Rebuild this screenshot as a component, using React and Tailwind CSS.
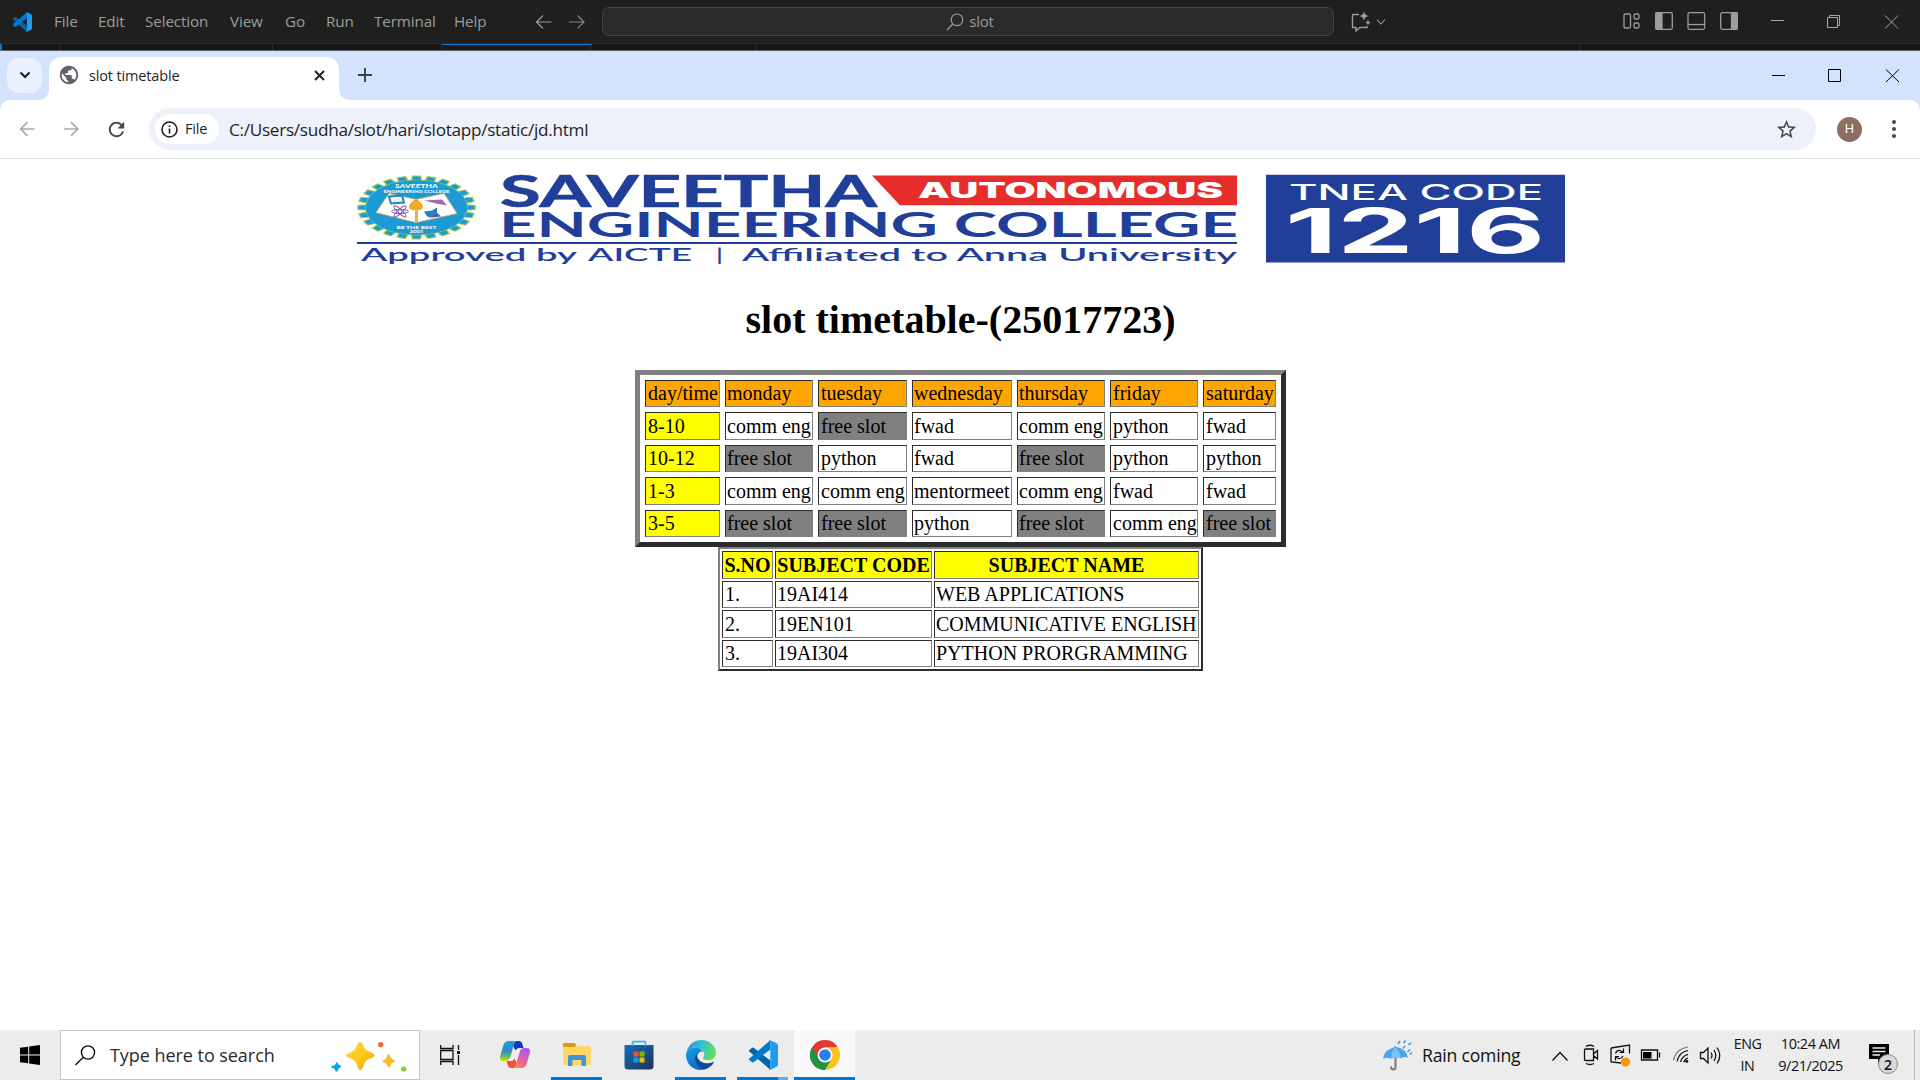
import React from "react";
import { MdPublic, MdStarBorder, MdRefresh } from "react-icons/md";

const menus = [
  ["File", "w-[44px]"],
  ["Edit", "w-[47px]"],
  ["Selection", "w-[85px]"],
  ["View", "w-[55px]"],
  ["Go", "w-[41px]"],
  ["Run", "w-[48px]"],
  ["Terminal", "w-[80px]"],
  ["Help", "w-[81px]"],
];

function VsLogo({ size }) {
  return (
    <svg width={size} height={size} viewBox="0 0 30 30" className="shrink-0">
      <path d="M2 9.4 4 7.8Q5 7.2 6 8L22.3 20.5V29.7L1.3 11.6Q.2 10.4 2 9.4Z" fill="#0065a9" />
      <path d="M2 20.6 4 22.2Q5 22.8 6 22L22.3 9.5V.3L1.3 18.4Q.2 19.6 2 20.6Z" fill="#007acc" />
      <path d="M22 .2 28.2 3.1Q30 4 30 5.6V24.4Q30 26 28.2 26.9L22 29.8Q21 30 20.6 29.2 22.3 29.4 22.3 27.5V2.5Q22.3.6 20.6.8 21 0 22 .2Z" fill="#1f9cf0" />
    </svg>
  );
}

function VsBar() {
  return (
    <header className="h-[51px] bg-[#1f1f1f] text-[#9d9d9d]">
      <div className="flex h-[43px] items-center">
        <div className="ml-[12px] flex w-[42px]">
          <VsLogo size={20} />
        </div>
        <nav className="flex text-[15.2px] tracking-[-0.1px]">
          {menus.map(([m, w]) => (
            <span key={m} className={w}>{m}</span>
          ))}
        </nav>
        <svg width="50" height="16" viewBox="0 0 50 16" fill="none" stroke="#9d9d9d" strokeWidth="1.2">
          <path d="M16.5 8H1.5M8 1.5 1.5 8 8 14.5" />
          <path d="M34 8H49M42.5 1.5 49 8 42.5 14.5" stroke="#858585" />
        </svg>
        <div className="ml-[17px] flex h-[29px] w-[732px] items-center justify-center gap-[5px] rounded-[7px] border border-[#454545] bg-[#2a2a2a] pl-[4px] text-[15px] tracking-[-0.2px]">
          <svg width="18" height="18" viewBox="0 0 18 18" fill="none" stroke="#9d9d9d" strokeWidth="1.2">
            <circle cx="11" cy="6.8" r="5.8" />
            <path d="M6.9 11 1 17" />
          </svg>
          slot
        </div>
        <svg width="36" height="22" viewBox="0 0 36 22" className="ml-[16px]" fill="none" stroke="#9d9d9d" strokeWidth="1.4">
          <path d="M9 3.5H3.5Q2.5 3.5 2.5 4.500V16.500H6V20L10 16.500H17V15" />
          <path d="M14 0Q14.500 4.500 19 5 14.500 5.500 14 10 13.500 5.500 9 5 13.500 4.500 14 0ZM18 8.500Q18.300 11.200 21 11.500 18.300 11.800 18 14.500 17.700 11.800 15 11.500 17.700 11.200 18 8.500Z" fill="#9d9d9d" stroke="none" />
          <path d="M27 8.500 31 13 35 8.500" strokeWidth="1.1" />
        </svg>
        <svg width="116" height="20" viewBox="0 0 116 20" className="-mt-px ml-[237px]" fill="none" stroke="#9d9d9d" strokeWidth="1.3">
          <rect x="1" y="3" width="6.500" height="14" rx="1.500" />
          <rect x="11" y="3" width="5" height="5" rx="1.500" />
          <rect x="11" y="12" width="5" height="5" rx="1.500" />
          <rect x="32.700" y="1.700" width="16.600" height="16.600" rx="1.500" />
          <path d="M33 2H39V18H33Z" fill="#9d9d9d" />
          <rect x="65" y="1.700" width="16.600" height="16.600" rx="1.500" />
          <path d="M65 13.500H81.500" />
          <rect x="97.700" y="1.700" width="16.600" height="16.600" rx="1.500" />
          <path d="M108.500 2H114V18H108.500Z" fill="#9d9d9d" />
        </svg>
        <svg width="128" height="14" viewBox="0 0 128 14" className="ml-[32px]" fill="none" stroke="#a8a8a8" strokeWidth="1">
          <path d="M0 5.500H13M56.500 2.500H66.500V12.500H56.500ZM58.500 2.500V.5H68.500V10.500H66.500" />
          <path d="M114 .5 127 13.500M127 .5 114 13.500" />
        </svg>
      </div>
      <div className="flex h-[7px] border-t border-[#2b2b2b] bg-[#161616]">
        <div className="w-[60px] border-l-2 border-r border-l-[#0078d4] border-r-[#2b2b2b]" />
        <div className="w-[213px] border-r border-[#2b2b2b]" />
        <div className="w-[169px] border-r border-[#2b2b2b]" />
        <div className="w-[150px] border-r border-t border-r-[#2b2b2b] border-t-[#0078d4] bg-[#1b1b1b]" />
        <div className="w-[164px] border-r border-[#2b2b2b]" />
        <div className="w-[825px] border-r border-[#2b2b2b]" />
      </div>
      <div className="h-px bg-[#596069]" />
    </header>
  );
}

function TabStrip() {
  return (
    <div className="flex h-[49px] items-center bg-[#d3e3fd]">
      <div className="ml-[7px] flex h-[35px] w-[35px] items-center justify-center rounded-[12px] bg-[#e9f1fe]">
        <svg width="12" height="8" viewBox="0 0 12 8" className="mb-[2px] ml-px" fill="none" stroke="#1f1f1f" strokeWidth="2.200">
          <path d="M1.500 1.500 6 6 10.500 1.500" />
        </svg>
      </div>
      <svg width="12" height="12" viewBox="0 0 12 12" className="-ml-[5px] self-end">
        <path d="M12 0V12H0Q12 12 12 0Z" fill="#fff" />
      </svg>
      <div className="flex h-[43px] w-[290px] items-center self-end rounded-t-[12px] bg-white">
        <MdPublic className="mb-[7px] ml-[9px] size-[22px] text-[#5f6368]" />
        <span className="mb-[6px] ml-[9px] w-[225px] text-[14.5px] tracking-[-0.15px] text-[#1f1f1f]">slot timetable</span>
        <svg width="11" height="11" viewBox="0 0 11 11" className="mb-[7px]" stroke="#1f1f1f" strokeWidth="1.900">
          <path d="M1 1 10 10M10 1 1 10" />
        </svg>
      </div>
      <svg width="12" height="12" viewBox="0 0 12 12" className="self-end">
        <path d="M0 0V12H12Q0 12 0 0Z" fill="#fff" />
      </svg>
      <svg width="14" height="14" viewBox="0 0 14 14" className="-mt-px ml-[7px]" stroke="#3c4043" strokeWidth="1.900">
        <path d="M0 7H14M7 0V14" />
      </svg>
      <svg width="128" height="14" viewBox="0 0 128 14" className="ml-auto mr-[20px]" fill="none" stroke="#000" strokeWidth="1">
        <path d="M0 6.500H13M56.500 .5H68.500V12.500H56.500Z" />
        <path d="M114 .5 127 13M127 .5 114 13" />
      </svg>
    </div>
  );
}

function Toolbar() {
  return (
    <div className="bg-[#d3e3fd]">
      <div className="flex h-[59px] items-center rounded-t-[10px] border-b border-[#dfe1e5] bg-white">
        <svg width="60" height="16" viewBox="0 0 60 16" className="ml-[19px]" fill="none" stroke="#ababab" strokeWidth="1.700">
          <path d="M15.500 8H2M8.500 1.200 1.700 8 8.500 14.800" />
          <path d="M45 8H58.500M52 1.200 58.800 8 52 14.800" />
        </svg>
        <MdRefresh className="ml-[26px] size-[23px] text-[#474747]" />
        <div className="ml-[21px] flex h-[42px] w-[1667px] items-center rounded-full bg-[#edf1fa]">
          <div className="ml-[6px] flex h-[30px] w-[64px] items-center rounded-full bg-white text-[14.5px] font-medium tracking-[-0.2px] text-[#1f1f1f]">
            <svg width="17" height="17" viewBox="0 0 17 17" className="ml-[6px] mr-[7px]" fill="none" stroke="#1f1f1f" strokeWidth="1.600">
              <circle cx="8.500" cy="8.500" r="7.500" />
              <path d="M8.500 7.500V12.500M8.500 4.300V6" />
            </svg>
            File
          </div>
          <span className="ml-[10px] pt-px text-[17.2px] tracking-[-0.3px] text-[#1f1f1f]">C:/Users/sudha/slot/hari/slotapp/static/jd.html</span>
          <MdStarBorder className="ml-auto mr-[18px] size-[23px] text-[#474747]" />
        </div>
        <div className="ml-[21px] flex size-[25px] items-center justify-center rounded-full bg-[#8d6e63] font-['Roboto'] text-[13px] text-white">H</div>
        <svg width="4" height="18" viewBox="0 0 4 18" className="ml-[30px]" fill="#474747">
          <circle cx="2" cy="2" r="2" />
          <circle cx="2" cy="9" r="2" />
          <circle cx="2" cy="16" r="2" />
        </svg>
      </div>
    </div>
  );
}

const teeth = Array.from({ length: 24 }, (_, i) => i * 15);

function Banner() {
  const fit = { lengthAdjust: "spacingAndGlyphs" };
  return (
    <svg width="1210" height="92" viewBox="355 171.500 1210 92" className="mx-auto mt-[13px] block overflow-visible">
      <g transform="translate(416.500 207) scale(1.860 1)">
        {teeth.map((a) => (
          <path key={a} d="M-2.200-31.500H2.200L2.800-26H-2.800Z" transform={`rotate(${a})`} fill="#1c9ad6" stroke="#a5cf4c" strokeWidth=".8" />
        ))}
        <circle r="27.500" fill="#1c9ad6" stroke="#a5cf4c" strokeWidth=".5" />
        <circle r="27" fill="#1c9ad6" />
      </g>
      <path d="M389 193 416 199 444 193 457 213 416 222 376 212Z" fill="#fff" stroke="#e8b45c" strokeWidth=".8" />
      <path d="M389 196 402 195 404 202 391 203Z" fill="#eaf5fb" stroke="#2484bd" strokeWidth="2" />
      <g fill="none" stroke="#7d55a5" strokeWidth="1">
        <ellipse cx="400" cy="211" rx="8.500" ry="2" />
        <ellipse cx="400" cy="211" rx="8" ry="2" transform="rotate(42 400 211)" />
        <ellipse cx="400" cy="211" rx="8" ry="2" transform="rotate(-42 400 211)" />
      </g>
      <path d="M424 200 442 199 447 205 436 203Z" fill="#9a6dad" />
      <path d="M424 211 432 210 437 207 437 212 441 216 432 217 427 216Z" fill="#2484bd" />
      <path d="M428 217 437 213 438 216Z" fill="#6b4f9d" />
      <path d="M416 198Q423 203 423 206 423 210 416 210 409 210 409 206 409 203 416 198Z" fill="#f3ab27" />
      <path d="M415 210H418V222H415Z" fill="#d9b071" />
      <g fill="#fff" className="font-['Lato'] font-bold" textAnchor="middle">
        <text x="416.500" y="187.500" fontSize="5.500" textLength="43" {...fit}>SAVEETHA</text>
        <text x="416.500" y="192" fontSize="3.800" textLength="66" {...fit}>ENGINEERING COLLEGE</text>
        <text x="416.500" y="228" fontSize="4.500" textLength="40" {...fit}>BE THE BEST</text>
        <text x="416.500" y="232" fontSize="3.600" textLength="14" {...fit}>2001</text>
      </g>
      <g fill="#213f99">
        <text x="500" y="206.300" fontSize="43" textLength="377" className="font-['Lato'] font-bold" stroke="#213f99" strokeWidth=".7" {...fit}>SAVEETHA</text>
        <text x="499" y="236.300" fontSize="34.500" textLength="739" className="font-['Lato'] font-bold" {...fit}>ENGINEERING COLLEGE</text>
        <path d="M357 241.500H1237V243.500H357Z" />
        <g className="font-['Lato'] font-semibold" fontSize="17">
          <text x="361" y="260" textLength="216" {...fit}>Approved by</text>
          <text x="588" y="260" textLength="104" {...fit}>AICTE</text>
          <text x="716" y="260" textLength="7" {...fit}>|</text>
          <text x="742" y="260" textLength="495" {...fit}>Affiliated to Anna University</text>
        </g>
      </g>
      <path d="M872 175H1237V204.800H900Z" fill="#e52d2b" />
      <text x="918" y="197.500" fontSize="21" textLength="305" fill="#fff" className="font-['Inter'] font-black" {...fit}>AUTONOMOUS</text>
      <path d="M1266 174.300H1565V262H1266Z" fill="#213f99" />
      <text x="1289" y="199" fontSize="21" textLength="254" fill="#fff" className="font-['Inter'] font-medium" {...fit}>TNEA CODE</text>
      <text x="1285" y="252.700" fontSize="62" textLength="260" fill="#fff" className="font-['Inter'] font-bold" {...fit}>1216</text>
    </svg>
  );
}

const slots = [
  ["day/time", "monday", "tuesday", "wednesday", "thursday", "friday", "saturday"],
  ["8-10", "comm eng", "free slot", "fwad", "comm eng", "python", "fwad"],
  ["10-12", "free slot", "python", "fwad", "free slot", "python", "python"],
  ["1-3", "comm eng", "comm eng", "mentormeet", "comm eng", "fwad", "fwad"],
  ["3-5", "free slot", "free slot", "python", "free slot", "comm eng", "free slot"],
];

const subjects = [
  ["1.", "19AI414", "WEB APPLICATIONS"],
  ["2.", "19EN101", "COMMUNICATIVE ENGLISH"],
  ["3.", "19AI304", "PYTHON PRORGRAMMING"],
];

const cell = "flex items-center whitespace-nowrap border border-t-[#2c2c2c] border-l-[#2c2c2c] border-b-[#808080] border-r-[#808080] pb-px leading-[22px]";

const shifted = [1, 3, 4];

function slotColor(text, r, c) {
  if (r === 0) return "bg-[#ffa500]";
  if (c === 0) return "bg-[#ffff00]";
  return text === "free slot" ? "bg-[#808080]" : "bg-white";
}

function Page() {
  return (
    <main className="h-[871px] overflow-hidden bg-white font-['Liberation_Serif',serif] text-[20px] text-black">
      <Banner />
      <h1 className="mt-[33px] pl-px text-center text-[40px] font-bold leading-[46px]">slot timetable-(25017723)</h1>
      <div className="ml-[635px] mt-[27px] grid h-[177px] w-[651px] grid-cols-[75px_88px_89px_100px_88px_88px_73px] grid-rows-[27px_28px_27px_28px_27px] gap-[5px] border-[5px] border-b-[#2c2c2c] border-l-[#808080] border-r-[#2c2c2c] border-t-[#808080] p-[5px]">
        {slots.map((row, r) =>
          row.map((t, c) => (
            <div key={`${r}-${c}`} className={`${cell} ${shifted.includes(c) ? "pl-px" : "pl-[2px]"} ${slotColor(t, r, c)}`}>{t}</div>
          ))
        )}
      </div>
      <div className="ml-[718px] grid h-[124px] w-[485px] grid-cols-[51px_157px_265px] grid-rows-[28px_27px_28px_27px] gap-[2px] border-2 border-b-[#2c2c2c] border-l-[#808080] border-r-[#2c2c2c] border-t-[#808080] p-[2px]">
        {["S.NO", "SUBJECT CODE", "SUBJECT NAME"].map((t) => (
          <div key={t} className={`${cell} justify-center bg-[#ffff00] font-bold`}>{t}</div>
        ))}
        {subjects.map((row) => row.map((t, c) => <div key={t} className={`${cell} ${c === 0 ? "pl-[2px]" : "pl-px"}`}>{t}</div>))}
      </div>
    </main>
  );
}

function Sparkles() {
  return (
    <svg width="78" height="34" viewBox="330 1036 78 34">
      <defs>
        <linearGradient id="gold" x1="0" y1="0" x2="1" y2="1">
          <stop offset="0" stopColor="#ffd83a" />
          <stop offset=".5" stopColor="#fcc91c" />
          <stop offset="1" stopColor="#eda712" />
        </linearGradient>
      </defs>
      <path d="M360 1040Q362 1040 363.500 1044 364.500 1048 370 1050 374.500 1051.500 374.500 1053.500 374.500 1055.500 370 1056.500 365 1058 364 1063 362.500 1068 360.500 1068 358 1068 357 1063 355.500 1058 351 1056.500 346 1055 346 1053.500 346 1052 350.500 1050.500 355 1048.500 356.500 1044 358 1040 360 1040Z" fill="url(#gold)" />
      <path d="M388.500 1052Q389.500 1052 390.500 1055 391.500 1057.500 395.500 1059 395.500 1060 391.500 1061 390 1065.500 388.800 1065.500 387.500 1065 386.500 1061.500 382.200 1060 382.200 1059 386.500 1057.500 387.500 1053 388.500 1052Z" fill="#f5bd2b" />
      <path d="M337 1060Q338 1060 338.500 1062.500 341.500 1063.500 341 1065 339 1066 338.500 1067 337.500 1070 336 1070 335 1068 334.500 1067 331 1065.500 331 1064.500 333 1063.500 335 1063 336 1060.500 337 1060Z" fill="#0ea5ea" />
      <circle cx="380.700" cy="1042.600" r="2.600" fill="#ee6730" />
      <circle cx="403.700" cy="1067" r="2.600" fill="#8ac63f" />
    </svg>
  );
}

function Copilot() {
  return (
    <svg width="30" height="28" viewBox="0 0 30 28">
      <defs>
        <linearGradient id="cpA" x1="0" y1="0" x2="0" y2="1">
          <stop offset="0" stopColor="#16a5dc" />
          <stop offset=".45" stopColor="#3285d8" />
          <stop offset=".75" stopColor="#54b86b" />
          <stop offset="1" stopColor="#f1d40e" />
        </linearGradient>
        <linearGradient id="cpB" x1="0" y1="1" x2=".6" y2="0">
          <stop offset="0" stopColor="#f9a03f" />
          <stop offset=".4" stopColor="#f0638a" />
          <stop offset="1" stopColor="#a55bf0" />
        </linearGradient>
      </defs>
      <path d="M13 0H19Q21.500 0 22.300 3L23.500 7H19Q16.500 7 15.500 9.500L12 3Z" fill="#1438b8" />
      <path d="M17 27H11Q8.500 27 7.700 24L6.500 20H11Q13.500 20 14.500 17.500L18 24Z" fill="#ee5340" />
      <path d="M9 0H17Q14.500 1 13.500 5L10 17Q9 20 6 20H3Q-.8 20 .2 15L3.200 4.500Q4.700 0 9 0Z" fill="url(#cpA)" />
      <path d="M21 27H13Q15.500 26 16.500 22L20 10Q21 7 24 7H27Q30.800 7 29.800 12L26.800 22.500Q25.300 27 21 27Z" fill="url(#cpB)" />
    </svg>
  );
}

function Explorer() {
  return (
    <svg width="28" height="24" viewBox="0 0 28 24">
      <path d="M0 1Q0 0 1 0H11.500L13.500 2 12 4H0Z" fill="#dd9a0b" />
      <path d="M0 4H12L14 3H27Q27.800 3 27.800 4V21.500Q27.800 22.300 27 22.300H1Q0 22.300 0 21.300Z" fill="#ffd768" />
      <path d="M5 23V14Q5 12 7 12H21Q23 12 23 14V23H18.500V17H9.500V23Z" fill="#3f94d6" />
    </svg>
  );
}

function Store() {
  return (
    <svg width="30" height="30" viewBox="0 0 30 30">
      <defs>
        <linearGradient id="st" x1="0" y1="0" x2="1" y2="1">
          <stop offset="0" stopColor="#0f70bd" />
          <stop offset="1" stopColor="#223255" />
        </linearGradient>
      </defs>
      <path d="M.5 5H29.500V26Q29.500 29.500 26 29.500H4Q.5 29.500 .5 26Z" fill="url(#st)" />
      <path d="M8.500 6V2.500Q8.500 1.700 9.300 1.700H20.700Q21.500 1.700 21.500 2.500V6" fill="none" stroke="#2fb9f0" strokeWidth="1.700" />
      <path d="M9.500 11.500H14.500V16.500H9.500Z" fill="#f25022" />
      <path d="M15.500 11.500H20.500V16.500H15.500Z" fill="#7fba00" />
      <path d="M9.500 17.500H14.500V22.500H9.500Z" fill="#00a4ef" />
      <path d="M15.500 17.500H20.500V22.500H15.500Z" fill="#ffb900" />
    </svg>
  );
}

function Edge() {
  return (
    <svg width="30" height="30" viewBox="0 0 30 30">
      <defs>
        <linearGradient id="edA" x1="0" y1=".3" x2="1" y2=".5">
          <stop offset="0" stopColor="#2499dc" />
          <stop offset=".5" stopColor="#35c1c9" />
          <stop offset="1" stopColor="#66e05a" />
        </linearGradient>
        <linearGradient id="edB" x1="0" y1="0" x2=".4" y2="1">
          <stop offset="0" stopColor="#1b9de2" />
          <stop offset="1" stopColor="#0d6ac9" />
        </linearGradient>
      </defs>
      <path d="M.5 12.500C2 5 8 0 15 0 24 0 30 6 30 13 30 17.500 26.500 20 22.500 20 19 20 17 19 17 18 17 17 18.300 16.500 18.300 14.500 18.300 10.500 14 7.500 9 7.500 4.500 7.500 1.500 10 .5 12.500Z" fill="url(#edA)" />
      <path d="M0 15C.2 10.500 4 7.500 9 7.500 13 7.500 16 9.500 17.500 12 15 10.500 11 13 10.500 17.500 10 23 14 28.500 19.500 29.200 9 32.500 0 25 0 15Z" fill="url(#edB)" />
      <path d="M13 12C9 14.500 8 20 11 24.500 13.500 28.500 17 29.800 19.500 29.200 23.500 28 26.500 25.300 27.800 22.600 28 22 27.500 21.700 27 22 20 25.500 11.500 21.500 11.300 16 11.300 14.300 12 13 13 12Z" fill="#124b93" />
    </svg>
  );
}

function Chrome() {
  return (
    <svg width="30" height="30" viewBox="0 0 30 30">
      <path d="M15 15 2 7.500A15 15 0 0 1 28 7.500L15 7.500Z" fill="#e33b2e" />
      <path d="M2 7.500A15 15 0 0 0 15 30L21.500 18.700 15 15Z" fill="#229342" />
      <path d="M28 7.500A15 15 0 0 1 15 30L21.500 18.700 15 7.500Z" fill="#fcc31e" />
      <path d="M2 7.500 8.500 18.700 15 15V7.500Z" fill="#e33b2e" />
      <path d="M2 7.500 8.500 18.700A7.500 7.500 0 0 0 21.500 18.700L15 30A15 15 0 0 1 2 7.500Z" fill="#229342" />
      <circle cx="15" cy="15" r="7.500" fill="#fff" />
      <circle cx="15" cy="15" r="5.800" fill="#2f7bf0" />
    </svg>
  );
}

function Umbrella() {
  return (
    <svg width="30" height="32" viewBox="0 0 30 32" fill="none">
      <path d="M12.500 9V28Q12.500 30.500 10.200 30.500 8 30.500 8 27.500" stroke="#7b7b80" strokeWidth="2" />
      <path d="M0 20Q1 11 10.500 8.500 12 6.500 13.500 8 23 9.500 25 19 21 17 18 19.500 12 17 8 20 4 17.500 0 20Z" fill="#4ba4ec" />
      <path d="M8 20Q8.500 12 12 8.300 17 12 18 19.500 12 17 8 20Z" fill="#7cc3f6" />
      <path d="M15 5 17 2M20.500 4 22.500 1.500M25.500 6 28 3.500M20 9.500 22 7M24.500 13 27 10.500M27 15.500 29 13.500" stroke="#3d9fe6" strokeWidth="1.700" />
    </svg>
  );
}

function TrayIcons() {
  return (
    <svg width="170" height="26" viewBox="1552 1043.500 170 26" fill="none" stroke="#111" strokeWidth="1.300">
      <path d="M1552.500 1062 1560 1054 1567.500 1062" />
      <path d="M1585.500 1050.500H1593.500V1062H1585.500Q1584.500 1062 1584.500 1061V1051.500Q1584.500 1050.500 1585.500 1050.500ZM1594 1055 1597.500 1052V1060.500L1594 1057.500M1586 1048Q1590 1045.500 1594 1048M1586 1065Q1590 1067 1594 1065" />
      <path d="M1611 1049.500 1629.500 1046.500V1055M1611 1049.500V1063.500L1621 1064.500" />
      <path d="M1615.500 1055Q1616.500 1051.500 1620 1052L1623 1053.500M1623.500 1050V1054H1619.500M1623 1057.500Q1621.500 1060.500 1618.500 1060L1615.500 1058.500M1615.500 1062V1058H1619" strokeWidth="1.200" />
      <circle cx="1625.500" cy="1063.500" r="4.600" fill="#ff9400" stroke="none" />
      <path d="M1641.500 1051.500H1657.500V1061.500H1641.500ZM1659.500 1054V1059" />
      <path d="M1643 1053.500H1651.500V1060H1643Z" fill="#000" stroke="none" />
      <g strokeWidth="1.200">
        <path d="M1673.500 1062Q1675.500 1050.500 1688 1048.500" stroke="#777" />
        <path d="M1677 1063Q1679 1053.500 1688 1052M1680.500 1063.500Q1682 1057.500 1688 1055.800M1683.800 1063.800Q1684.500 1060.500 1688 1059.500" />
      </g>
      <circle cx="1686.800" cy="1062.800" r="1.500" fill="#111" stroke="none" />
      <path d="M1700.500 1054H1703.500L1708 1049.500V1064.500L1703.500 1060H1700.500ZM1711 1054Q1713 1057 1711 1060M1714 1051.500Q1717.500 1057 1714 1062.500M1717 1049Q1722.500 1057 1717 1065" />
    </svg>
  );
}

const apps = [
  { name: "copilot", icon: <Copilot />, box: "w-[51px] ml-[29px]", bar: "" },
  { name: "explorer", icon: <Explorer />, box: "w-[51px] ml-[11px]", bar: "bg-[#0078d7]" },
  { name: "store", icon: <Store />, box: "w-[51px] ml-[11px]", bar: "" },
  { name: "edge", icon: <Edge />, box: "w-[51px] ml-[11px]", bar: "bg-[#0078d7]" },
  { name: "code", icon: <VsLogo size={30} />, box: "w-[51px] ml-[11px]", bar: "border-r-[10px] border-[#66abe6] bg-[#0078d7]" },
  { name: "chrome", icon: <Chrome />, box: "w-[61px] ml-[6px] bg-[#f9f9f9]", bar: "bg-[#0078d7]" },
];

function Taskbar() {
  return (
    <footer className="flex h-[50px] items-center bg-[#ececec] text-[#111]">
      <svg width="20" height="20" viewBox="0 0 20 20" className="ml-[20px]">
        <path d="M0 2.800 8.200 1.700V9.500H0ZM9.200 1.500 20 0V9.500H9.200ZM0 10.500H8.200V18.300L0 17.200ZM9.200 10.500H20V20L9.200 18.500Z" />
      </svg>
      <div className="ml-[20px] flex h-[50px] w-[360px] items-center border border-[#c6c6c6] bg-white">
        <svg width="21" height="21" viewBox="0 0 21 21" className="ml-[14px]" fill="none" stroke="#111" strokeWidth="1.400">
          <circle cx="13" cy="7.500" r="6.600" />
          <path d="M8.300 12.200.5 20" />
        </svg>
        <span className="ml-[14px] w-[220px] text-[18px] tracking-[-0.05px] text-[#2b2b2b]">Type here to search</span>
        <Sparkles />
      </div>
      <svg width="20" height="20" viewBox="0 0 20 20" className="ml-[20px]" fill="none" stroke="#111" strokeWidth="1.300">
        <path d="M.7 0V3.500H13V0M.7 20V16.500H13V20M.7 5.500H13V14.500H.7ZM18.500 0V5M18.500 10V20" />
        <path d="M17 6H20V9H17Z" fill="#111" stroke="none" />
      </svg>
      <div className="flex">
        {apps.map((a) => (
          <div key={a.name} className={`flex h-[50px] flex-col ${a.box}`}>
            <div className="flex h-[47px] items-center justify-center pt-[3px]">{a.icon}</div>
            <div className={`h-[3px] ${a.bar}`} />
          </div>
        ))}
      </div>
      <div className="ml-auto flex items-center">
        <Umbrella />
        <span className="ml-[9px] w-[130px] whitespace-nowrap text-[17.6px] tracking-[-0.2px]">Rain coming</span>
        <TrayIcons />
        <div className="w-[51px] text-center text-[14.3px] leading-[22px] tracking-[-0.5px]">
          <div>ENG</div>
          <div>IN</div>
        </div>
        <div className="w-[75px] text-center text-[14.5px] leading-[22px] tracking-[-0.45px]">
          <div>10:24 AM</div>
          <div>9/21/2025</div>
        </div>
        <div className="relative ml-[21px] h-[32px] w-[45px]">
          <svg width="20" height="20" viewBox="0 0 20 20" className="mt-[5px]">
            <path d="M0 0H20V15H13L9 19.500V15H0Z" fill="#000" />
            <path d="M3.500 4H16.500M3.500 7.500H16.500M3.500 11H11" stroke="#ececec" strokeWidth="1.300" />
          </svg>
          <div className="absolute left-[9px] top-[15px] flex size-[20px] items-center justify-center rounded-full border border-[#8a8a8a] bg-[#d8d8d8] text-[14px] font-semibold">2</div>
        </div>
        <div className="mr-[5px] h-[50px] border-l border-[#bcbcbc]" />
      </div>
    </footer>
  );
}

export default function App() {
  return (
    <div className="h-[1080px] w-[1920px] overflow-hidden bg-white font-['Open_Sans','Noto_Sans',sans-serif]">
      <VsBar />
      <TabStrip />
      <Toolbar />
      <Page />
      <Taskbar />
    </div>
  );
}
